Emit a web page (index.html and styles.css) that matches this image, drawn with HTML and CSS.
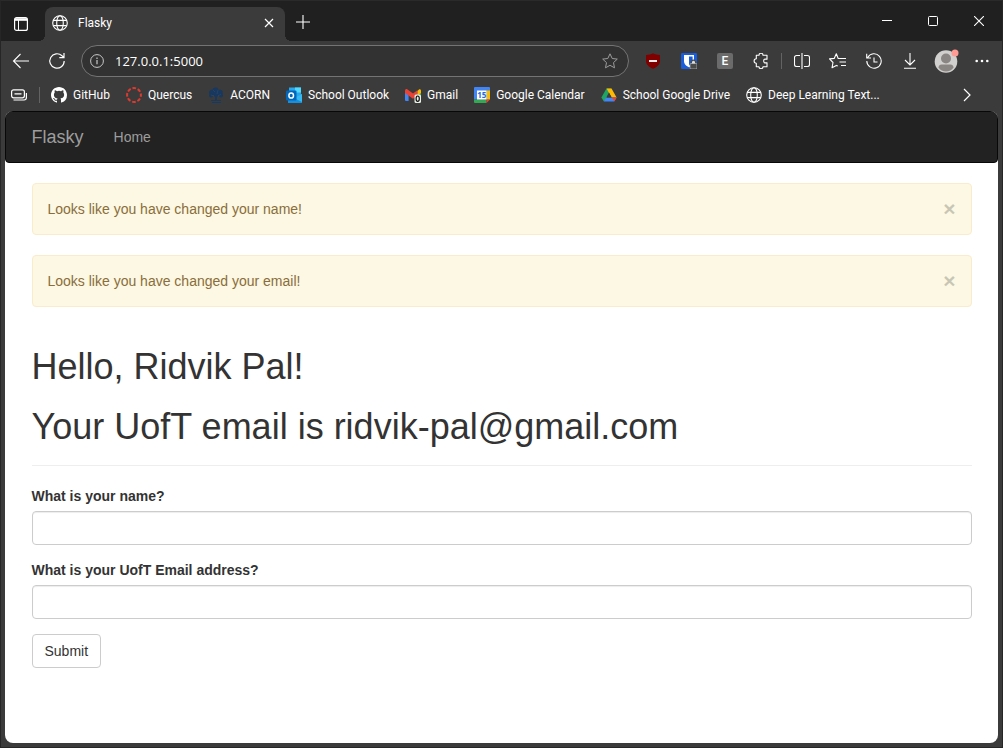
FILE: index.html
```html
<!DOCTYPE html>
<html lang="en">
<head>
<meta charset="utf-8">
<meta name="viewport" content="width=device-width, initial-scale=1">
<title>Flasky</title>
<link rel="stylesheet" href="styles.css">
</head>
<body>
<svg class="sprite" aria-hidden="true">
  <symbol id="globe" viewBox="0 0 16 16"><g fill="none" stroke="currentColor" stroke-width="1.1"><circle cx="8" cy="8" r="7.3"/><ellipse cx="8" cy="8" rx="3.3" ry="7.3"/><path d="M1.3 5.4h13.4M1.3 10.6h13.4"/></g></symbol>
</svg>
<div class="window">
  <header class="tabstrip">
    <button class="tab-actions" aria-label="Tab actions">
      <svg width="14" height="14" viewBox="0 0 14 14" fill="none" stroke="currentColor"><rect x=".6" y=".6" width="12.8" height="12.8" rx="2" stroke-width="1.2"/><path d="M1 2.5h12" stroke-width="2.6"/><path d="M4.5 3v10"/></svg>
    </button>
    <div class="tab">
      <svg class="icon16"><use href="#globe"/></svg>
      <span class="tab-title">Flasky</span>
      <button class="tab-close" aria-label="Close tab">
        <svg width="10" height="10" viewBox="0 0 10 10" stroke="currentColor" stroke-width="1.2"><path d="M1 1l8 8M9 1L1 9"/></svg>
      </button>
    </div>
    <button class="new-tab" aria-label="New tab">
      <svg width="14" height="14" viewBox="0 0 14 14" stroke="currentColor" stroke-width="1.1"><path d="M7 0v14M0 7h14"/></svg>
    </button>
    <div class="window-controls">
      <button aria-label="Minimize"><svg width="10" height="10" viewBox="0 0 10 10" stroke="currentColor"><path d="M0 4.5h10"/></svg></button>
      <button aria-label="Maximize"><svg width="10" height="10" viewBox="0 0 10 10" fill="none" stroke="currentColor"><rect x=".5" y=".5" width="9" height="9" rx="1"/></svg></button>
      <button aria-label="Close"><svg width="10" height="10" viewBox="0 0 10 10" stroke="currentColor" stroke-width="1.1"><path d="M0 0l10 10M10 0L0 10"/></svg></button>
    </div>
  </header>

  <div class="toolbar">
    <button class="tool" aria-label="Back"><svg width="18" height="16" viewBox="0 0 18 16" fill="none" stroke="currentColor" stroke-width="1.1"><path d="M17 8H1.5M8.5 1L1.5 8l7 7"/></svg></button>
    <button class="tool" aria-label="Refresh"><svg width="18" height="18" viewBox="0 0 18 18" fill="none" stroke="currentColor" stroke-width="1.2"><path d="M16.2 9A7.2 7.2 0 1 1 14 3.800L16 5.500M16 1v4.700h-4.700"/></svg></button>
    <div class="address">
      <svg width="14" height="14" viewBox="0 0 14 14" fill="none" stroke="#c8c8c8"><circle cx="7" cy="7" r="6.400"/><path d="M7 6v4.200M7 3.600v1.300" stroke-width="1.200"/></svg>
      <input class="url" type="text" value="127.0.0.1:5000" aria-label="Address">
      <button class="favorite" aria-label="Add to favorites"><svg width="16" height="16" viewBox="0 0 16 16" fill="none" stroke="#9c9c9c" stroke-linejoin="round"><path d="M8 .8l2.200 4.700 5.100.6-3.800 3.500 1 5.200L8 12.300l-4.500 2.500 1-5.200L.7 6.100l5.100-.6z"/></svg></button>
    </div>
    <button class="tool" aria-label="Content blocker"><svg width="16" height="16" viewBox="0 0 16 16"><path d="M8 .3C6 1.700 3.500 1.900 1 1.900v6c0 4 3.500 6.300 7 7.900 3.500-1.600 7-3.900 7-7.900v-6C12.500 1.900 10 1.700 8 .3z" fill="#800000"/><path d="M4 7h8v2H4z" fill="#eee"/></svg></button>
    <button class="tool" aria-label="Password manager"><svg width="16" height="16" viewBox="0 0 16 16"><rect width="16" height="16" rx="1" fill="#175ddc"/><path d="M3 2h10v6c0 3.500-2.500 5-5 6.200C5.500 13 3 11.500 3 8z" fill="#fff"/><path d="M8 3.500h3.600V8c0 2-1.500 3.500-3.600 4.600z" fill="#175ddc"/><path d="M10.300 11V9.300a2.200 2.200 0 0 1 4.400 0V11" fill="#ddd" stroke="#4a4a4a" stroke-width="1.300"/><rect x="9" y="10.500" width="7" height="5.500" rx="1" fill="#4a4a4a" stroke="#ccc" stroke-width=".6"/></svg></button>
    <button class="tool" aria-label="Extension E"><span class="extension-e">E</span></button>
    <button class="tool" aria-label="Extensions"><svg width="16" height="16" viewBox="0 0 16 16" fill="none" stroke="currentColor" stroke-width="1.100" stroke-linejoin="round"><path d="M3.300 2.300H6a2 2 0 0 1 4 0h4v4c-2.600-.5-3.300 0-3.300 1.700s.7 2.200 3.300 1.700v4h-4a2 2 0 0 1-4 0H3.300V10.200a2.200 2.200 0 0 1 0-4.400z"/></svg></button>
    <span class="tool-divider"></span>
    <button class="tool" aria-label="Split screen"><svg width="16" height="16" viewBox="0 0 16 16" fill="none" stroke="currentColor" stroke-width="1.100"><path d="M8 0v16M6 2.500H2.500a2 2 0 0 0-2 2v7a2 2 0 0 0 2 2H6M10 2.500h3.500a2 2 0 0 1 2 2v7a2 2 0 0 1-2 2H10"/></svg></button>
    <button class="tool" aria-label="Favorites"><svg width="18" height="16" viewBox="0 0 18 16" fill="none" stroke="currentColor" stroke-width="1.100" stroke-linejoin="round"><path d="M11 5.500H9.200L7.300.8 5.200 5.400l-4.700.5 3.500 3.600-1 5.300 4.300-2.400 1.500.6M10.500 5.500H17M10.500 9H17M12 12.500h5"/></svg></button>
    <button class="tool" aria-label="History"><svg width="16" height="16" viewBox="0 0 16 16" fill="none" stroke="currentColor" stroke-width="1.100"><path d="M1.700 4.500A7.200 7.200 0 1 1 .8 8M.7.8v4.200H5M8 4.500V9h3.500"/></svg></button>
    <button class="tool" aria-label="Downloads"><svg width="14" height="16" viewBox="0 0 14 16" fill="none" stroke="currentColor" stroke-width="1.100"><path d="M7 0v12M2 7l5 5 5-5M1 15.300h12"/></svg></button>
    <button class="tool" aria-label="Profile"><svg width="26" height="24" viewBox="0 0 26 24"><circle cx="13" cy="12.500" r="11.300" fill="#d2d0ce"/><circle cx="13" cy="9.500" r="5" fill="#8a8684"/><path d="M5.500 18.500c0-2 1.500-3 3-3h9c1.500 0 3 1 3 3-1.500 2.500-4.500 4-7.500 4s-6-1.500-7.500-4z" fill="#8a8684"/><circle cx="22" cy="4" r="3.500" fill="#ff9b94"/></svg></button>
    <button class="tool" aria-label="Settings and more"><svg width="14" height="4" viewBox="0 0 14 4" fill="currentColor"><circle cx="1.700" cy="2" r="1.300"/><circle cx="7" cy="2" r="1.300"/><circle cx="12.300" cy="2" r="1.300"/></svg></button>
  </div>

  <nav class="bookmarks" aria-label="Favorites bar">
    <button class="workspaces" aria-label="Workspaces"><svg width="16" height="12" viewBox="0 0 16 12" fill="none" stroke="currentColor" stroke-width="1.200"><rect x=".6" y=".8" width="12.800" height="8" rx="2"/><path d="M3.500 4.800h7M2.500 11H13a2.500 2.500 0 0 0 2.400-2.500V4"/></svg></button>
    <span class="bookmark-divider"></span>
    <a class="bookmark" href="#"><svg class="icon16" viewBox="0 0 16 16" fill="#fff"><path d="M8 0C3.580 0 0 3.580 0 8c0 3.540 2.290 6.530 5.470 7.590.4.070.55-.17.55-.38 0-.19-.01-.82-.01-1.490-2.010.37-2.530-.49-2.690-.94-.09-.23-.48-.94-.82-1.130-.28-.15-.68-.52-.01-.53.63-.01 1.080.58 1.230.82.72 1.210 1.870.87 2.330.66.070-.52.280-.87.510-1.070-1.780-.2-3.640-.89-3.640-3.950 0-.87.310-1.590.82-2.150-.08-.2-.36-1.020.08-2.120 0 0 .67-.21 2.200.82a7.600 7.600 0 0 1 4 0c1.530-1.040 2.200-.82 2.200-.82.44 1.100.16 1.920.08 2.120.51.560.82 1.270.82 2.150 0 3.070-1.870 3.750-3.650 3.950.29.250.54.730.54 1.480 0 1.070-.01 1.930-.01 2.200 0 .21.15.46.55.38A8 8 0 0 0 16 8c0-4.420-3.580-8-8-8z"/></svg>GitHub</a>
    <a class="bookmark" href="#"><svg class="icon16" viewBox="0 0 16 16" fill="none" stroke="#e03a30"><circle cx="8" cy="8" r="6.900" stroke-width="2" stroke-dasharray="3.600 1.820" stroke-dashoffset="1.800"/></svg>Quercus</a>
    <a class="bookmark" href="#"><svg class="icon16" viewBox="0 0 16 16" fill="#18385f"><circle cx="7.500" cy="3.500" r="3"/><circle cx="3.800" cy="5.500" r="2.700"/><circle cx="12" cy="5.500" r="2.700"/><circle cx="3" cy="8.500" r="2"/><circle cx="13" cy="8.500" r="2"/><path d="M4 6h8l-3 4v3h4v1H3v-1h4v-3zM4 15h9v1H4z"/><path d="M5 3l2 2M10 3L9 7M3 8l3 1M13 7l-3 2" stroke="#304a69" stroke-width=".6"/></svg>ACORN</a>
    <a class="bookmark" href="#"><svg class="icon16" viewBox="0 0 16 16"><path d="M3 .5h12v10H3z" fill="#28a8ea"/><path d="M9 .5h6v5H9z" fill="#50d9ff"/><path d="M3 5h6v5H3z" fill="#0364b8"/><path d="M2 8l7 3 7-4v9H2z" fill="#1490df"/><path d="M8 11l8-4v8z" fill="#35b8f1"/><rect y="3.500" width="10.500" height="10" rx="1" fill="#0067bd"/><ellipse cx="5.200" cy="8.500" rx="2.300" ry="2.600" fill="none" stroke="#fff" stroke-width="1.500"/></svg>School Outlook</a>
    <a class="bookmark" href="#"><svg class="icon16" viewBox="0 0 16 16"><path d="M0 4h3.600v10H1a1 1 0 0 1-1-1z" fill="#4285f4"/><path d="M12.400 4H16v9a1 1 0 0 1-1 1h-2.600z" fill="#34a853"/><path d="M12.400 4L14 2.400c1-.6 2 .2 2 1.300V6l-3.600 2.600z" fill="#fbbc04"/><path d="M0 6V3.700C0 2.400 1.400 1.600 2.500 2.400L8 6.500l4.400-3.300v5.200L8 11.700z" fill="#ea4335"/><rect x="9.500" y="7.500" width="6.500" height="8.500" rx="1.500" fill="#e8f0e8"/><ellipse cx="12.700" cy="11.700" rx="1.600" ry="2.700" fill="none" stroke="#111" stroke-width="1.200"/></svg>Gmail</a>
    <a class="bookmark" href="#"><svg class="icon16" viewBox="0 0 16 16"><path d="M1 0h14a1 1 0 0 1 1 1v11.500H0V1a1 1 0 0 1 1-1z" fill="#4285f4"/><path d="M12.500 3.500H16v9h-3.500z" fill="#fbbc04"/><path d="M0 12.500h12.500V16H1a1 1 0 0 1-1-1z" fill="#34a853"/><path d="M12.500 12.500H16L12.500 16z" fill="#ea4335"/><path d="M3 3.500h9.500v9H3z" fill="#fff"/><text x="7.800" y="11" class="calendar-day">15</text></svg>Google Calendar</a>
    <a class="bookmark" href="#"><svg class="icon16" viewBox="0 0 16 16"><path d="M5.500 1.500h5L4.500 13l-1.800 1.200L.4 10.500z" fill="#1fa463"/><path d="M5.500 1.500h5l5.100 9h-5z" fill="#ffba00"/><path d="M5 10.500h10.600l-2.300 4H2.700z" fill="#4285f4"/><path d="M10.700 10.500h4.900l-2.300 3.800z" fill="#ea4335"/><path d="M8 5.600l2.700 4.900H5.300z" fill="#3b3b3b"/></svg>School Google Drive</a>
    <a class="bookmark" href="#"><svg class="icon16"><use href="#globe"/></svg>Deep Learning Text...</a>
    <button class="more" aria-label="More favorites"><svg width="8" height="14" viewBox="0 0 8 14" fill="none" stroke="currentColor" stroke-width="1.200"><path d="M1 1l6 6-6 6"/></svg></button>
  </nav>

  <div class="page">
    <nav class="navbar">
      <div class="container navbar-inner">
        <a class="brand" href="#">Flasky</a>
        <a class="nav-link" href="#">Home</a>
      </div>
    </nav>
    <main class="container">
      <div class="alert" role="alert"><span>Looks like you have changed your name!</span><button class="close" aria-label="Dismiss">×</button></div>
      <div class="alert" role="alert"><span>Looks like you have changed your email!</span><button class="close" aria-label="Dismiss">×</button></div>
      <div class="page-header">
        <h1>Hello, Ridvik Pal!</h1>
        <h1>Your UofT email is ridvik-pal@gmail.com</h1>
      </div>
      <form>
        <div class="form-group">
          <label for="name">What is your name?</label>
          <input class="form-control" id="name" type="text">
        </div>
        <div class="form-group">
          <label for="email">What is your UofT Email address?</label>
          <input class="form-control" id="email" type="text">
        </div>
        <button class="submit" type="button">Submit</button>
      </form>
    </main>
  </div>
</div>
</body>
</html>
```
FILE: styles.css
```css
*, *::before, *::after { box-sizing: border-box; }

body {
  margin: 0;
  background: #202020;
}

button {
  margin: 0;
  padding: 0;
  border: 0;
  background: none;
  color: inherit;
  font: inherit;
}

a { color: inherit; text-decoration: none; }

svg { display: block; flex: none; }

.sprite { position: absolute; width: 0; height: 0; }

.icon16 { width: 16px; height: 16px; }

/* Browser window */
.window {
  display: flex;
  flex-direction: column;
  min-height: 100vh;
  padding-bottom: 4px;
  border: 1px solid #262626;
  border-top-color: #2a2a2a;
  background: #3b3b3b;
  color: #fff;
  font: 12px/16px Roboto, "Open Sans", sans-serif;
}

.tabstrip {
  display: flex;
  align-items: flex-end;
  height: 40px;
  background: #202020;
}

.tab-actions {
  display: grid;
  place-items: center;
  width: 40px;
  height: 34px;
}

.tab {
  position: relative;
  display: flex;
  align-items: center;
  width: 240px;
  height: 34px;
  margin-left: 4px;
  padding: 0 11px 2px 7px;
  border-radius: 8px 8px 0 0;
  background: #3b3b3b;
}

/* Flared feet of the active tab */
.tab::before,
.tab::after {
  content: "";
  position: absolute;
  bottom: 0;
  width: 6px;
  height: 6px;
}

.tab::before {
  right: 100%;
  background: radial-gradient(circle at 0 0, #202020 6px, #3b3b3b 6px);
}

.tab::after {
  left: 100%;
  background: radial-gradient(circle at 100% 0, #202020 6px, #3b3b3b 6px);
}

.tab-title { flex: 1; margin-left: 10px; }

.tab-close, .new-tab { display: grid; place-items: center; }

.new-tab { width: 36px; height: 38px; }

.window-controls {
  display: flex;
  align-self: stretch;
  margin-left: auto;
}

.window-controls button {
  display: grid;
  place-items: center;
  width: 46px;
}

.toolbar {
  display: flex;
  align-items: center;
  height: 40px;
  padding: 0 2px;
}

.tool {
  display: grid;
  place-items: center;
  flex: none;
  width: 36px;
  height: 32px;
}

.tool-divider {
  width: 1px;
  height: 16px;
  margin: 0 2px;
  background: #636363;
}

.address {
  display: flex;
  align-items: center;
  flex: 1;
  height: 32px;
  margin: 0 6px;
  padding: 0 10px 0 8px;
  border: 1px solid #747474;
  border-radius: 16px;
  background: #323232;
}

.url {
  flex: 1;
  min-width: 0;
  margin-left: 11px;
  padding: 0;
  border: 0;
  outline: 0;
  background: none;
  color: #fff;
  font: 13px/20px "Open Sans", "Noto Sans", sans-serif;
}

.extension-e {
  width: 16px;
  height: 16px;
  border-radius: 2px;
  background: #6b6b6b;
  font-weight: 500;
}

.bookmarks {
  display: flex;
  align-items: center;
  height: 30px;
  padding: 0 20px 2px 10px;
}

.bookmark-divider {
  width: 1px;
  height: 16px;
  margin: 0 11px 0 12px;
  background: #636363;
}

.bookmark {
  display: flex;
  align-items: center;
  gap: 6px;
  margin-right: 16px;
  white-space: nowrap;
}

.calendar-day {
  fill: #2869d8;
  font: bold 8px "Open Sans", sans-serif;
  text-anchor: middle;
}

.more { margin-left: auto; padding-right: 11px; }

/* Web page */
.page {
  flex: 1;
  margin: 0 4px;
  overflow: hidden;
  border-radius: 8px;
  background: #fff;
  color: #333;
  font: 14px/20px "Liberation Sans", Arial, sans-serif;
}

.container {
  max-width: 970px;
  margin: 0 auto;
  padding: 0 15px;
}

.navbar {
  margin-bottom: 20px;
  border: 1px solid #080808;
  border-radius: 4px;
  background: #222;
  color: #9d9d9d;
}

.navbar-inner { display: flex; gap: 30px; }

.brand { padding: 15px 0; font-size: 18px; }

.nav-link { padding: 15px 0; }

.alert {
  display: flex;
  justify-content: space-between;
  margin-bottom: 20px;
  padding: 15px;
  border: 1px solid #faebcc;
  border-radius: 4px;
  background: #fcf8e3;
  color: #8a6d3b;
}

.close {
  height: 20px;
  color: #000;
  font-size: 21px;
  font-weight: bold;
  line-height: 20px;
  opacity: 0.2;
}

.page-header {
  margin: 40px 0 20px;
  padding-bottom: 9px;
  border-bottom: 1px solid #eee;
}

h1 {
  margin: 20px 0 10px;
  font-size: 36px;
  font-weight: 500;
  line-height: 1.1;
}

.form-group { margin-bottom: 15px; }

label {
  display: block;
  margin-bottom: 5px;
  font-weight: bold;
}

.form-control {
  display: block;
  width: 100%;
  height: 34px;
  padding: 6px 12px;
  border: 1px solid #ccc;
  border-radius: 4px;
  background: #fff;
  box-shadow: inset 0 1px 1px rgba(0, 0, 0, 0.075);
  color: #555;
  font: inherit;
}

.submit {
  padding: 6px 12px;
  border: 1px solid #ccc;
  border-radius: 4px;
  background: #fff;
}
```
